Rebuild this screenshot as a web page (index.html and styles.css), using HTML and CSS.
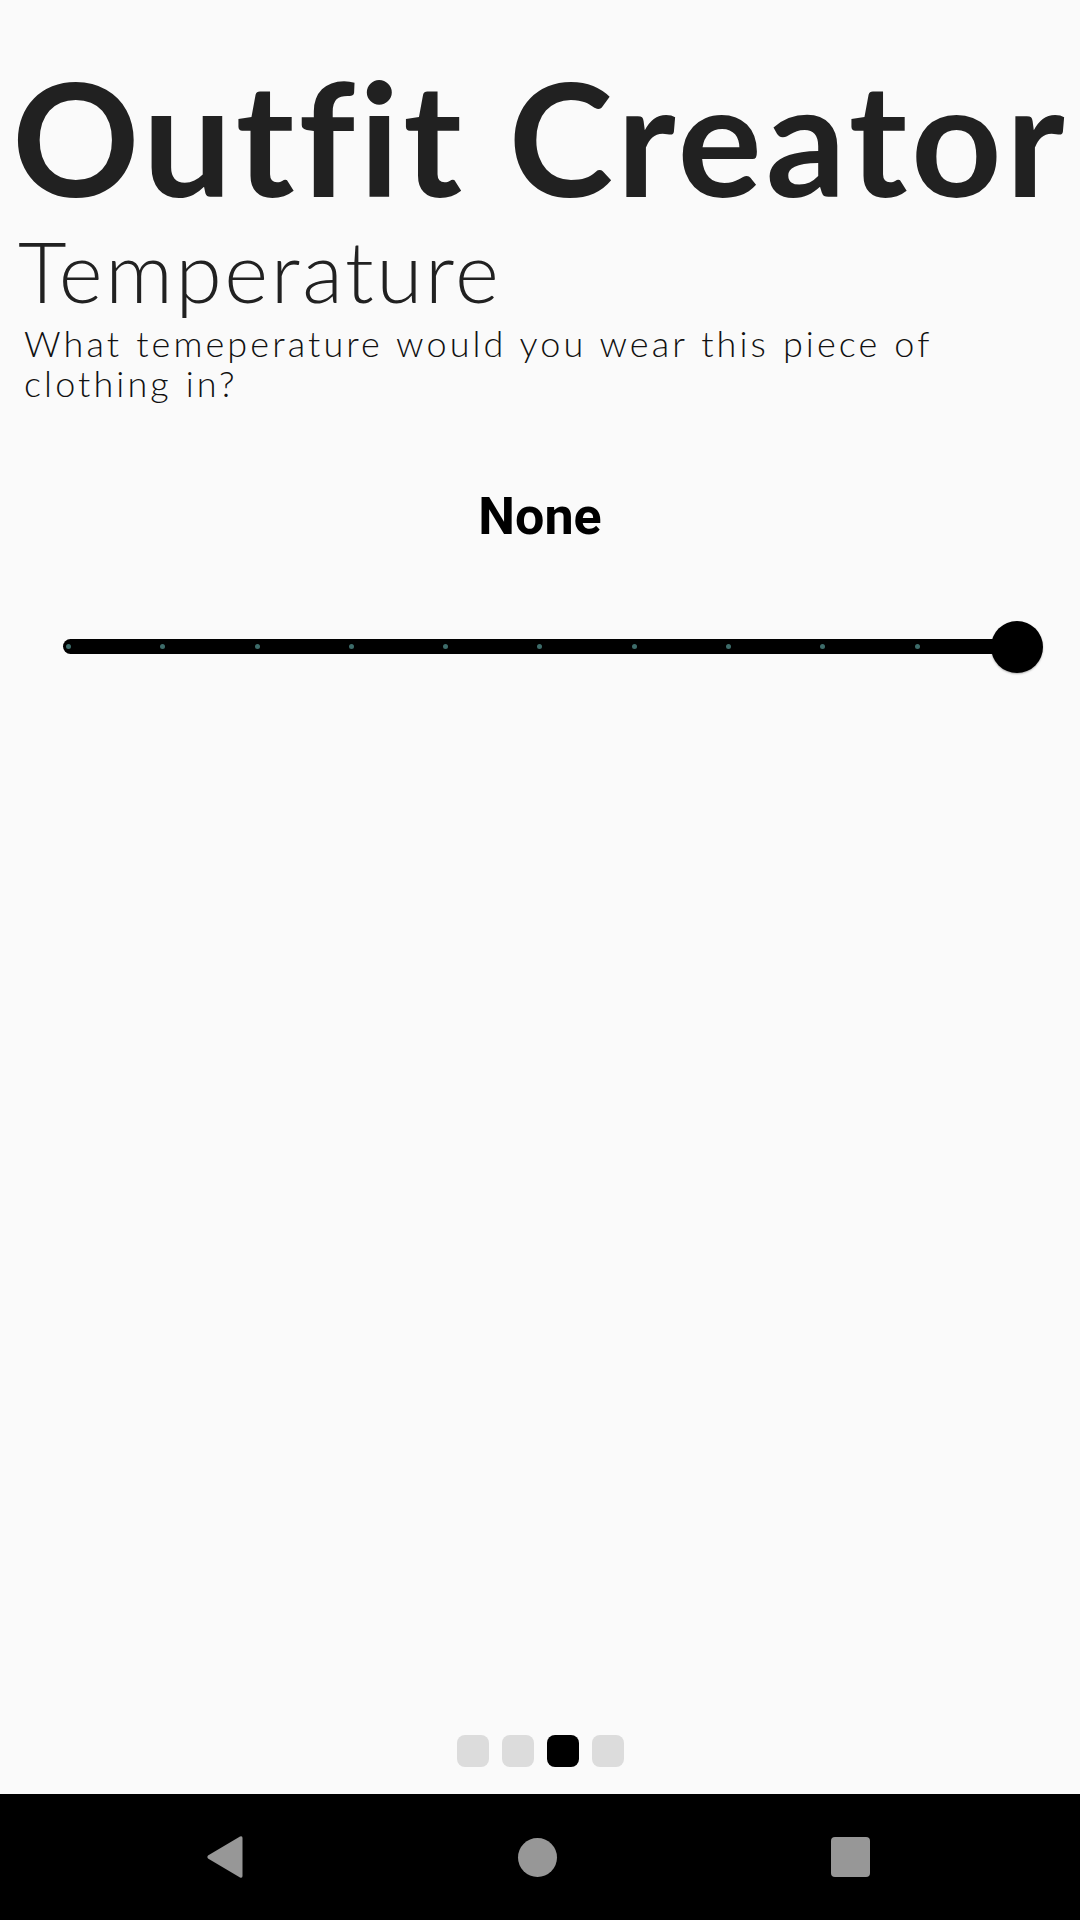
FILE: index.html
```html
<!DOCTYPE html>
<html>
<head>
<meta charset="utf-8">
<link rel="stylesheet" href="styles.css">
</head>
<body>
<div class="screen">
  <main class="content">
    <h1 class="title">Outfit Creator</h1>
    <h2 class="heading">Temperature</h2>
    <p class="question">What temeperature would you wear this piece of clothing in?</p>
    <div class="value">None</div>
    <div class="slider">
      <div class="track">
        <span class="tick"></span><span class="tick"></span><span class="tick"></span><span class="tick"></span><span class="tick"></span><span class="tick"></span><span class="tick"></span><span class="tick"></span><span class="tick"></span><span class="tick"></span><span class="tick"></span>
        <span class="thumb"></span>
      </div>
    </div>
    <div class="spacer"></div>
    <div class="pager">
      <span class="page"></span><span class="page"></span><span class="page active"></span><span class="page"></span>
    </div>
  </main>
  <nav class="navbar">
    <svg class="nav-back" width="38" height="44" viewBox="0 0 38 44"><path d="M34 1.5 Q36.5 0.5 36.5 3 L36.5 41 Q36.5 43.5 34 42.5 L2 23.5 Q0.5 22 2 20.5 Z" fill="#979797"/></svg>
    <span class="nav-home"></span>
    <span class="nav-recent"></span>
  </nav>
</div>
</body>
</html>
```

FILE: styles.css
```css
html, body {
  margin: 0;
  padding: 0;
  background: #fafafa;
}
.screen {
  width: 1080px;
  height: 1920px;
  display: flex;
  flex-direction: column;
}
.content {
  flex: 1;
  display: flex;
  flex-direction: column;
}
.title {
  margin: 60px 0 0 12px;
  font-family: "Lato", sans-serif;
  font-weight: 700;
  font-size: 158px;
  line-height: 152px;
  color: #212121;
  letter-spacing: 4px;
  font-variant-ligatures: none;
  white-space: nowrap;
}
.heading {
  margin: 17px 0 0 18px;
  font-family: "Lato", sans-serif;
  font-weight: 300;
  font-size: 84px;
  line-height: 84px;
  letter-spacing: 2.6px;
  color: #212121;
}
.question {
  margin: 10px 0 0 24px;
  width: 960px;
  font-family: "Lato", sans-serif;
  font-weight: 300;
  font-size: 36px;
  line-height: 40px;
  letter-spacing: 3.1px;
  word-spacing: 1px;
  color: #111;
}
.value {
  margin-top: 84px;
  text-align: center;
  font-family: "Roboto", sans-serif;
  font-weight: 700;
  font-size: 52px;
  line-height: 60px;
  color: #000;
}
.slider {
  margin: 92px 63px 0 63px;
}
.track {
  position: relative;
  height: 15px;
  background: #000;
  border-radius: 7.5px 0 0 7.5px;
  display: flex;
  align-items: center;
  justify-content: space-between;
  padding: 0 3px;
}
.tick {
  width: 5px;
  height: 5px;
  border-radius: 50%;
  background: #3d6b69;
}
.thumb {
  position: absolute;
  right: -26px;
  top: -18.5px;
  width: 52px;
  height: 52px;
  border-radius: 50%;
  background: #000;
  box-shadow: 0 1px 2px rgba(0,0,0,0.3);
}
.spacer {
  flex: 1;
}
.pager {
  display: flex;
  justify-content: center;
  gap: 13px;
  margin-bottom: 27px;
}
.page {
  width: 32px;
  height: 32px;
  border-radius: 8px;
  background: #dcdcdc;
}
.page.active {
  background: #000;
}
.navbar {
  height: 126px;
  background: #000;
  display: flex;
  align-items: center;
  justify-content: space-between;
  padding: 0 210px 0 206px;
}
.nav-back {
  display: block;
}
.nav-home {
  width: 39px;
  height: 39px;
  border-radius: 50%;
  background: #979797;
}
.nav-recent {
  width: 39px;
  height: 40px;
  border-radius: 4px;
  background: #979797;
}
```
